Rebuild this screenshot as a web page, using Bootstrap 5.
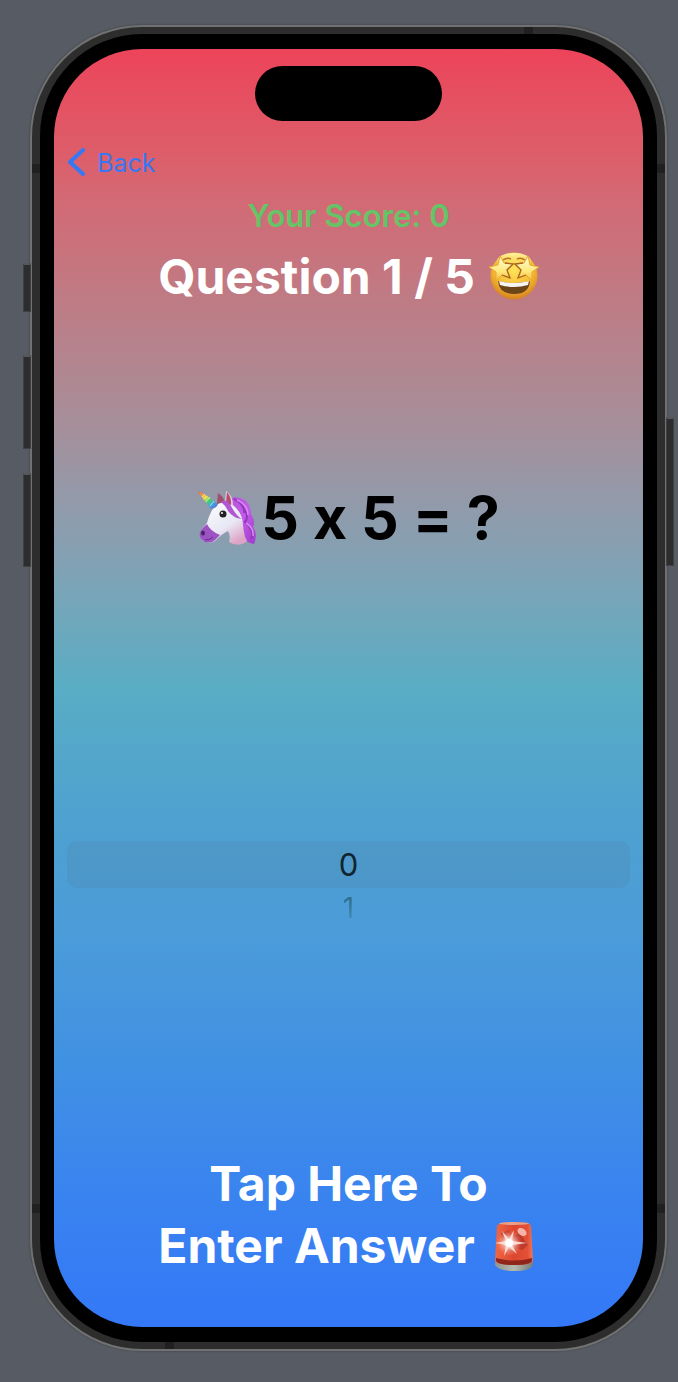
<!DOCTYPE html>
<html lang="en">
<head>
<meta charset="utf-8">
<meta name="viewport" content="width=device-width, initial-scale=1">
<title>Multiplication Quiz</title>
<link href="https://cdn.jsdelivr.net/npm/bootstrap@5.3.0/dist/css/bootstrap.min.css" rel="stylesheet">
<style>
  body { background: #575c64; font-family: Inter, "Liberation Sans", sans-serif; font-feature-settings: "calt" 0; }
  .stage { padding: 25px 11px 31px 30px; }
  .phone { border: 2px solid #717171; border-radius: 112px; background: #2d2d2d; padding: 7px 8px; box-shadow: 0 0 2px #33363b; }
  .bezel { background: #000; border-radius: 102px; padding: 15px 14px; }
  .screen {
    border-radius: 88px;
    background: linear-gradient(#ed445a 0%, #dd5d69 8%, #d26a75 12%, #c07a83 19%, #a78e99 29%, #929aaa 35.5%, #7ba4b7 42%, #59adc4 50%, #4fa1d0 60%, #4a9bd9 70%, #4090e4 80%, #3983f0 90%, #3478f7 100%);
  }
  /* side keys and antenna bands lie over the frame */
  .side-key { position: absolute; width: 8px; background: #2d2d2d; border: 1px solid #404144; border-top: 2px solid #55575a; }
  .key-left { left: -9px; }
  .key-right { right: -9px; height: 149px; top: 390px; }
  .band { position: absolute; background: #202020; }
  .band-h { width: 8px; height: 9px; }
  .band-v { width: 9px; height: 7px; }
  .island { width: 187px; height: 55px; border-radius: 28px; background: #000; margin-top: 17px; }
  .back-link { color: #3478f6; font-size: 25px; line-height: 30px; margin: 27px 0 0 13px; gap: 12px; }
  .score { color: #65c466; font-size: 31px; line-height: 40px; margin-top: 18px; }
  .headline { font-size: 48px; line-height: 62px; color: #fff; gap: 14px; }
  .question { margin-top: 10px; }
  .equation { font-size: 59px; line-height: 72px; gap: 4px; color: #000; margin-top: 174px; }
  .wheel { margin: 287px 13px 0; }
  .wheel-item { font-size: 31px; line-height: 47px; color: #10252f; border-radius: 10px; cursor: pointer; }
  .btn-check:checked + .wheel-item { background: rgba(80, 110, 120, .12); }
  .wheel-next { font-size: 28px; line-height: 40px; color: #32708f; -webkit-mask-image: linear-gradient(#000 30%, rgba(0,0,0,.4) 75%); mask-image: linear-gradient(#000 30%, rgba(0,0,0,.4) 75%); }
  .answer { padding: 0 0 50px; }
</style>
</head>
<body>
<div class="stage min-vh-100 d-flex flex-column">
  <div class="phone position-relative flex-grow-1 d-flex flex-column">
    <span class="side-key key-left" style="top:236px;height:49px"></span>
    <span class="side-key key-left" style="top:328px;height:94px"></span>
    <span class="side-key key-left" style="top:446px;height:94px"></span>
    <span class="side-key key-right"></span>
    <span class="band band-v" style="top:0;right:132px"></span>
    <span class="band band-v" style="bottom:0;left:133px"></span>
    <span class="band band-h" style="top:137px;left:0"></span>
    <span class="band band-h" style="top:137px;right:0"></span>
    <span class="band band-h" style="bottom:136px;left:0"></span>
    <span class="band band-h" style="bottom:136px;right:0"></span>

    <div class="bezel flex-grow-1 d-flex flex-column">
      <main class="screen flex-grow-1 d-flex flex-column">
        <div class="island align-self-center"></div>

        <a href="#" class="back-link d-flex align-items-center align-self-start text-decoration-none">
          <svg width="18" height="30" viewBox="0 0 18 30" fill="none" stroke="currentColor" stroke-width="4" stroke-linecap="round" stroke-linejoin="round" aria-hidden="true"><path d="M16 2 3 14 16 26"/></svg>
          <span>Back</span>
        </a>

        <p class="score text-center fw-semibold mb-0">Your Score: 0</p>

        <h1 class="headline question d-flex justify-content-center align-items-center fw-bold mb-0">
          <span>Question 1 / 5</span>
          <svg width="50" height="50" viewBox="0 0 50 50" role="img" aria-label="Star-struck face">
            <defs>
              <radialGradient id="face" cx=".5" cy=".35" r=".65"><stop offset="0" stop-color="#ffe65c"/><stop offset=".65" stop-color="#f5b932"/><stop offset="1" stop-color="#d47f20"/></radialGradient>
              <linearGradient id="shine" x2="0" y2="1"><stop offset="0" stop-color="#fff6a8"/><stop offset="1" stop-color="#fbd13f" stop-opacity="0"/></linearGradient>
              <linearGradient id="star" x2="0" y2="1"><stop offset="0" stop-color="#fffbe0"/><stop offset=".6" stop-color="#ffe97c"/><stop offset="1" stop-color="#f5b93b"/></linearGradient>
            </defs>
            <circle cx="25" cy="24" r="23.500" fill="url(#face)"/>
            <ellipse cx="25" cy="9" rx="17" ry="8" fill="url(#shine)"/>
            <path d="M9 29Q25 33 41 29Q40 42 25 42Q10 42 9 29Z" fill="#6b4418"/>
            <path d="M10 29Q25 33 40 29L39 33Q25 37 11 33Z" fill="#f4f5f3"/>
            <path d="M14 8Q18 5 22 7M28 7Q32 5 36 8" fill="none" stroke="#b97422" stroke-width="1.500"/>
            <path d="M11 4 15 11 25 12 18 18 21 26 13 23 7 29 7 20 0 15 9 13Z" fill="url(#star)" stroke="#e6a72f" stroke-linejoin="round"/>
            <path d="M39 4 35 11 25 12 32 18 29 26 37 23 43 29 43 20 50 15 41 13Z" fill="url(#star)" stroke="#e6a72f" stroke-linejoin="round"/>
            <path d="M16 11 24 12 18 18 21 26 13 23M34 11 26 12 32 18 29 26 37 23" fill="none" stroke="#a76523" stroke-width="1.300"/>
          </svg>
        </h1>

        <div class="equation d-flex justify-content-center align-items-center fw-bold">
          <svg width="60" height="60" viewBox="0 0 60 60" role="img" aria-label="Unicorn">
            <defs>
              <linearGradient id="horn" x1="0" y1="0" x2="1" y2="1"><stop offset="0" stop-color="#ed6048"/><stop offset=".2" stop-color="#f09c43"/><stop offset=".36" stop-color="#efe54f"/><stop offset=".52" stop-color="#53cb63"/><stop offset=".7" stop-color="#3daddd"/><stop offset="1" stop-color="#7550cc"/></linearGradient>
              <linearGradient id="head" x2=".7" y2="1"><stop offset="0" stop-color="#fff"/><stop offset=".65" stop-color="#e8e8f5"/><stop offset="1" stop-color="#dda4c6"/></linearGradient>
              <linearGradient id="mane" x2="1" y2="1"><stop offset="0" stop-color="#b354d8"/><stop offset=".5" stop-color="#c25de8"/><stop offset="1" stop-color="#9f3acb"/></linearGradient>
            </defs>
            <path d="M29 12Q39 6 49 13Q54 18 54 26Q59 34 56 39Q61 46 57 56Q49 55 42 46L33 26Z" fill="url(#mane)"/>
            <path d="M45 18Q53 28 48 34Q58 43 54 51M37 11Q48 16 47 25" fill="none" stroke="#9337bf" stroke-width="2"/>
            <path d="M40 12Q51 17 51 27M49 35Q57 40 56 48" fill="none" stroke="#dc87f2" stroke-width="1.500"/>
            <path d="M18 18Q28 9 37 18Q46 26 46 37Q47 48 50 53Q42 60 32 54Q34 48 31 43Q25 46 21 50Q16 56 9 54Q2 52 3 45Q5 40 10 35Q13 24 18 18Z" fill="url(#head)"/>
            <path d="M10 36Q13 43 23 47L20 50Q15 56 8 54Q1 50 3 44Q5 40 10 36Z" fill="#9c54c2"/>
            <ellipse cx="6" cy="45" rx="2" ry="2.500" fill="#4c246b"/><path d="M8 52Q13 52 16 49" fill="none" stroke="#64317f"/>
            <path d="M1 4Q3 2 21 16Q20 20 14 21Z" fill="url(#horn)"/>
            <path d="M5 9 8 6M9 14 13 9M13 18 17 13" stroke="#ffffff90"/>
            <path d="M20 16 21 5Q26 8 28 14Z" fill="#a0506f"/><path d="M28 15 29 3Q36 7 36 18Z" fill="#ded4e6"/><path d="M29 15 30 4Q35 10 34 17Z" fill="#b84a6c"/>
            <path d="M24 14Q30 10 34 18Q40 29 45 31Q36 30 31 23Q29 18 24 14Z" fill="#b356d4"/>
            <circle cx="26" cy="26" r="3.500" fill="#222126"/><circle cx="25" cy="25" r="1" fill="#fff"/>
          </svg>
          <span>5 x 5 = ?</span>
        </div>

        <div class="wheel text-center" role="radiogroup" aria-label="Answer">
          <input type="radio" class="btn-check" name="answer" id="answer0" value="0" checked>
          <label class="wheel-item d-block" for="answer0">0</label>
          <input type="radio" class="btn-check" name="answer" id="answer1" value="1">
          <label class="wheel-item wheel-next d-block" for="answer1">1</label>
        </div>

        <button type="button" class="answer headline btn border-0 rounded-0 fw-bold mt-auto">
          <span class="d-block">Tap Here To</span>
          <span class="headline d-flex justify-content-center align-items-center">
            <span>Enter Answer</span>
            <svg width="50" height="50" viewBox="0 0 50 50" role="img" aria-label="Siren">
              <defs>
                <linearGradient id="dome"><stop offset="0" stop-color="#ee6846"/><stop offset=".5" stop-color="#dc4630"/><stop offset=".85" stop-color="#e25036"/><stop offset="1" stop-color="#f07856"/></linearGradient>
                <linearGradient id="base"><stop offset="0" stop-color="#8d9490"/><stop offset=".5" stop-color="#b7b9b0"/><stop offset="1" stop-color="#747b79"/></linearGradient>
                <radialGradient id="glow"><stop offset="0" stop-color="#fff"/><stop offset=".4" stop-color="#ffd0c4" stop-opacity=".8"/><stop offset="1" stop-color="#ff8066" stop-opacity="0"/></radialGradient>
              </defs>
              <path d="M6 41Q25 36 44 41V44Q41 50 25 50Q9 50 6 44Z" fill="url(#base)"/>
              <path d="M8 5Q9 1 25 1Q41 1 42 5L44 40Q42 44 25 44Q8 44 6 40Z" fill="url(#dome)"/>
              <path d="M7 37Q25 42 43 37V40Q41 44 25 44Q9 44 7 40Z" fill="#90251d"/>
              <ellipse cx="25" cy="2.500" rx="15" ry="1.500" fill="#e8a08b"/>
              <path d="M12 12 20 9 24 15 31 12 36 20 39 24 33 29 28 27 22 32 14 26Z" fill="#a52f29" opacity=".6"/>
              <ellipse cx="33" cy="11" rx="5" ry="3.500" fill="#f6b4a9" transform="rotate(35 33 11)"/>
              <circle cx="20" cy="22" r="13" fill="url(#glow)"/>
              <path d="M6 22 17 20 13 10 20 18 25 9 23 20 38 22 23 24 28 33 20 26 15 35 17 24Z" fill="#ffe3dc" opacity=".9"/>
              <circle cx="20" cy="22" r="4" fill="#fff"/>
            </svg>
          </span>
        </button>
      </main>
    </div>
  </div>
</div>
<script src="https://cdn.jsdelivr.net/npm/bootstrap@5.3.0/dist/js/bootstrap.bundle.min.js"></script>
</body>
</html>
